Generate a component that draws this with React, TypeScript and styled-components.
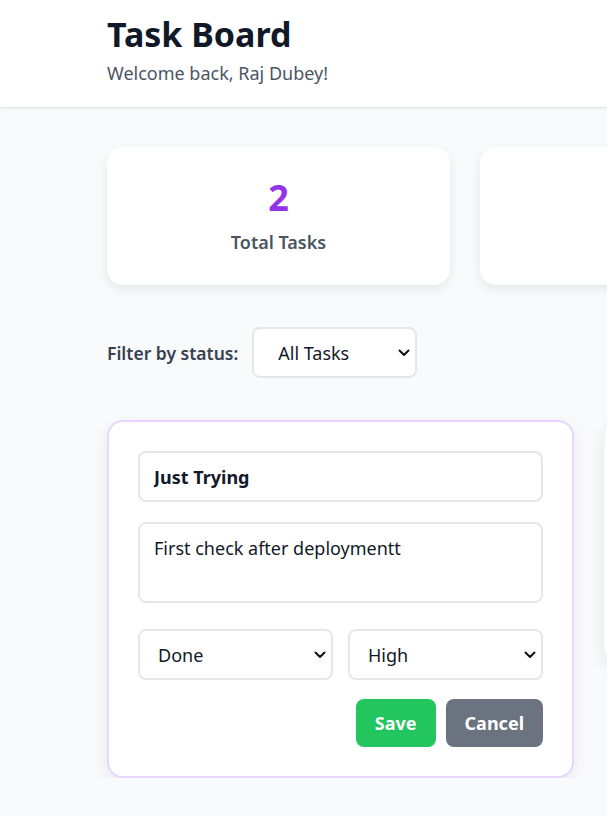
import styled, { createGlobalStyle } from "styled-components";

const chevron =
  "data:image/svg+xml;utf8,<svg xmlns='http://www.w3.org/2000/svg' width='12' height='8' viewBox='0 0 12 8'><path d='M1.5 1.5 L6 6 L10.5 1.5' fill='none' stroke='%23111' stroke-width='2' stroke-linecap='round' stroke-linejoin='round'/></svg>";

const GlobalStyle = createGlobalStyle`
  * {
    box-sizing: border-box;
  }

  body {
    margin: 0;
    background-color: #f9fafb;
    font-family: "Noto Sans", "Open Sans", sans-serif;
    color: #111827;
    overflow: hidden;
  }
`;

const Header = styled.header`
  background-color: #ffffff;
  border-bottom: 1px solid #e5e7eb;
  box-shadow: 0 1px 3px rgba(0, 0, 0, 0.05);
  height: 108px;
  padding: 13px 0 0 107px;
`;

const Title = styled.h1`
  margin: 0;
  font-size: 34px;
  font-weight: 700;
  color: #111827;
  line-height: 1.25;
`;

const Subtitle = styled.p`
  margin: 5px 0 0;
  font-size: 18px;
  color: #4b5563;
`;

const Main = styled.main`
  padding: 39px 0 0 107px;
`;

const StatsGrid = styled.div`
  display: grid;
  grid-template-columns: repeat(4, 343px);
  gap: 30px;
`;

const StatCard = styled.div`
  background-color: #ffffff;
  border-radius: 16px;
  height: 138px;
  box-shadow: 0 4px 12px rgba(0, 0, 0, 0.08);
  display: flex;
  flex-direction: column;
  align-items: center;
  justify-content: center;
  gap: 13px;
`;

const StatValue = styled.span<{ $color: string }>`
  font-size: 36px;
  font-weight: 700;
  line-height: 1.1;
  color: ${(p) => p.$color};
`;

const StatLabel = styled.span`
  font-size: 18px;
  font-weight: 600;
  color: #4b5563;
`;

const FilterBar = styled.div`
  display: flex;
  align-items: center;
  gap: 14px;
  margin-top: 42px;
`;

const FilterLabel = styled.label`
  font-size: 17.5px;
  font-weight: 600;
  color: #374151;
`;

const Select = styled.select<{ $width?: string; $padLeft?: number }>`
  appearance: none;
  height: 51px;
  width: ${(p) => p.$width || "100%"};
  border: 2px solid #e5e7eb;
  border-radius: 8px;
  background: #ffffff url("${chevron}") no-repeat right 5px center;
  padding: 0 26px 0 ${(p) => p.$padLeft ?? 18}px;
  font-family: inherit;
  font-size: 18px;
  color: #111827;
`;

const TaskGrid = styled.div`
  display: grid;
  grid-template-columns: repeat(3, 467px);
  gap: 29px;
  margin-top: 42px;
  align-items: start;
`;

const TaskCard = styled.div<{ $editing?: boolean }>`
  background-color: #ffffff;
  border-radius: 16px;
  border: 2px solid ${(p) => (p.$editing ? "#e9d5ff" : "#f3f4f6")};
  box-shadow: 0 6px 16px rgba(0, 0, 0, 0.08);
  padding: 29px;
  min-height: 244px;
`;

const EditForm = styled.form`
  display: flex;
  flex-direction: column;
`;

const TitleInput = styled.input`
  height: 51px;
  border: 2px solid #e5e7eb;
  border-radius: 8px;
  padding: 0 14px;
  font-family: inherit;
  font-size: 18px;
  font-weight: 700;
  color: #111827;
`;

const DescInput = styled.textarea`
  margin-top: 20px;
  height: 81px;
  border: 2px solid #e5e7eb;
  border-radius: 8px;
  padding: 12px 14px;
  font-family: inherit;
  font-size: 18px;
  color: #111827;
  resize: none;
`;

const SelectRow = styled.div`
  display: grid;
  grid-template-columns: 1fr 1fr;
  gap: 15px;
  margin-top: 26px;
`;

const ButtonRow = styled.div`
  display: flex;
  justify-content: flex-end;
  gap: 10px;
  margin-top: 19px;
`;

const Button = styled.button<{ $variant: "save" | "cancel" }>`
  height: 48px;
  padding: 0 19px;
  border: none;
  border-radius: 8px;
  font-family: inherit;
  font-size: 18px;
  font-weight: 700;
  color: #ffffff;
  background-color: ${(p) => (p.$variant === "save" ? "#22c55e" : "#6b7280")};
  cursor: pointer;
`;

export default function App() {
  return (
    <>
      <GlobalStyle />
      <Header>
        <Title>Task Board</Title>
        <Subtitle>Welcome back, Raj Dubey!</Subtitle>
      </Header>
      <Main>
        <StatsGrid>
          <StatCard>
            <StatValue $color="#9333ea">2</StatValue>
            <StatLabel>Total Tasks</StatLabel>
          </StatCard>
          <StatCard />
        </StatsGrid>

        <FilterBar>
          <FilterLabel htmlFor="status-filter">Filter by status:</FilterLabel>
          <Select id="status-filter" $width="165px" $padLeft={24} defaultValue="all">
            <option value="all">All Tasks</option>
            <option value="todo">To Do</option>
            <option value="progress">In Progress</option>
            <option value="done">Done</option>
          </Select>
        </FilterBar>

        <TaskGrid>
          <TaskCard $editing>
            <EditForm onSubmit={(e) => e.preventDefault()}>
              <TitleInput defaultValue="Just Trying" />
              <DescInput defaultValue="First check after deploymentt" />
              <SelectRow>
                <Select defaultValue="done">
                  <option value="todo">To Do</option>
                  <option value="progress">In Progress</option>
                  <option value="done">Done</option>
                </Select>
                <Select defaultValue="high">
                  <option value="low">Low</option>
                  <option value="medium">Medium</option>
                  <option value="high">High</option>
                </Select>
              </SelectRow>
              <ButtonRow>
                <Button $variant="save" type="submit">Save</Button>
                <Button $variant="cancel" type="button">Cancel</Button>
              </ButtonRow>
            </EditForm>
          </TaskCard>
          <TaskCard />
        </TaskGrid>
      </Main>
    </>
  );
}
